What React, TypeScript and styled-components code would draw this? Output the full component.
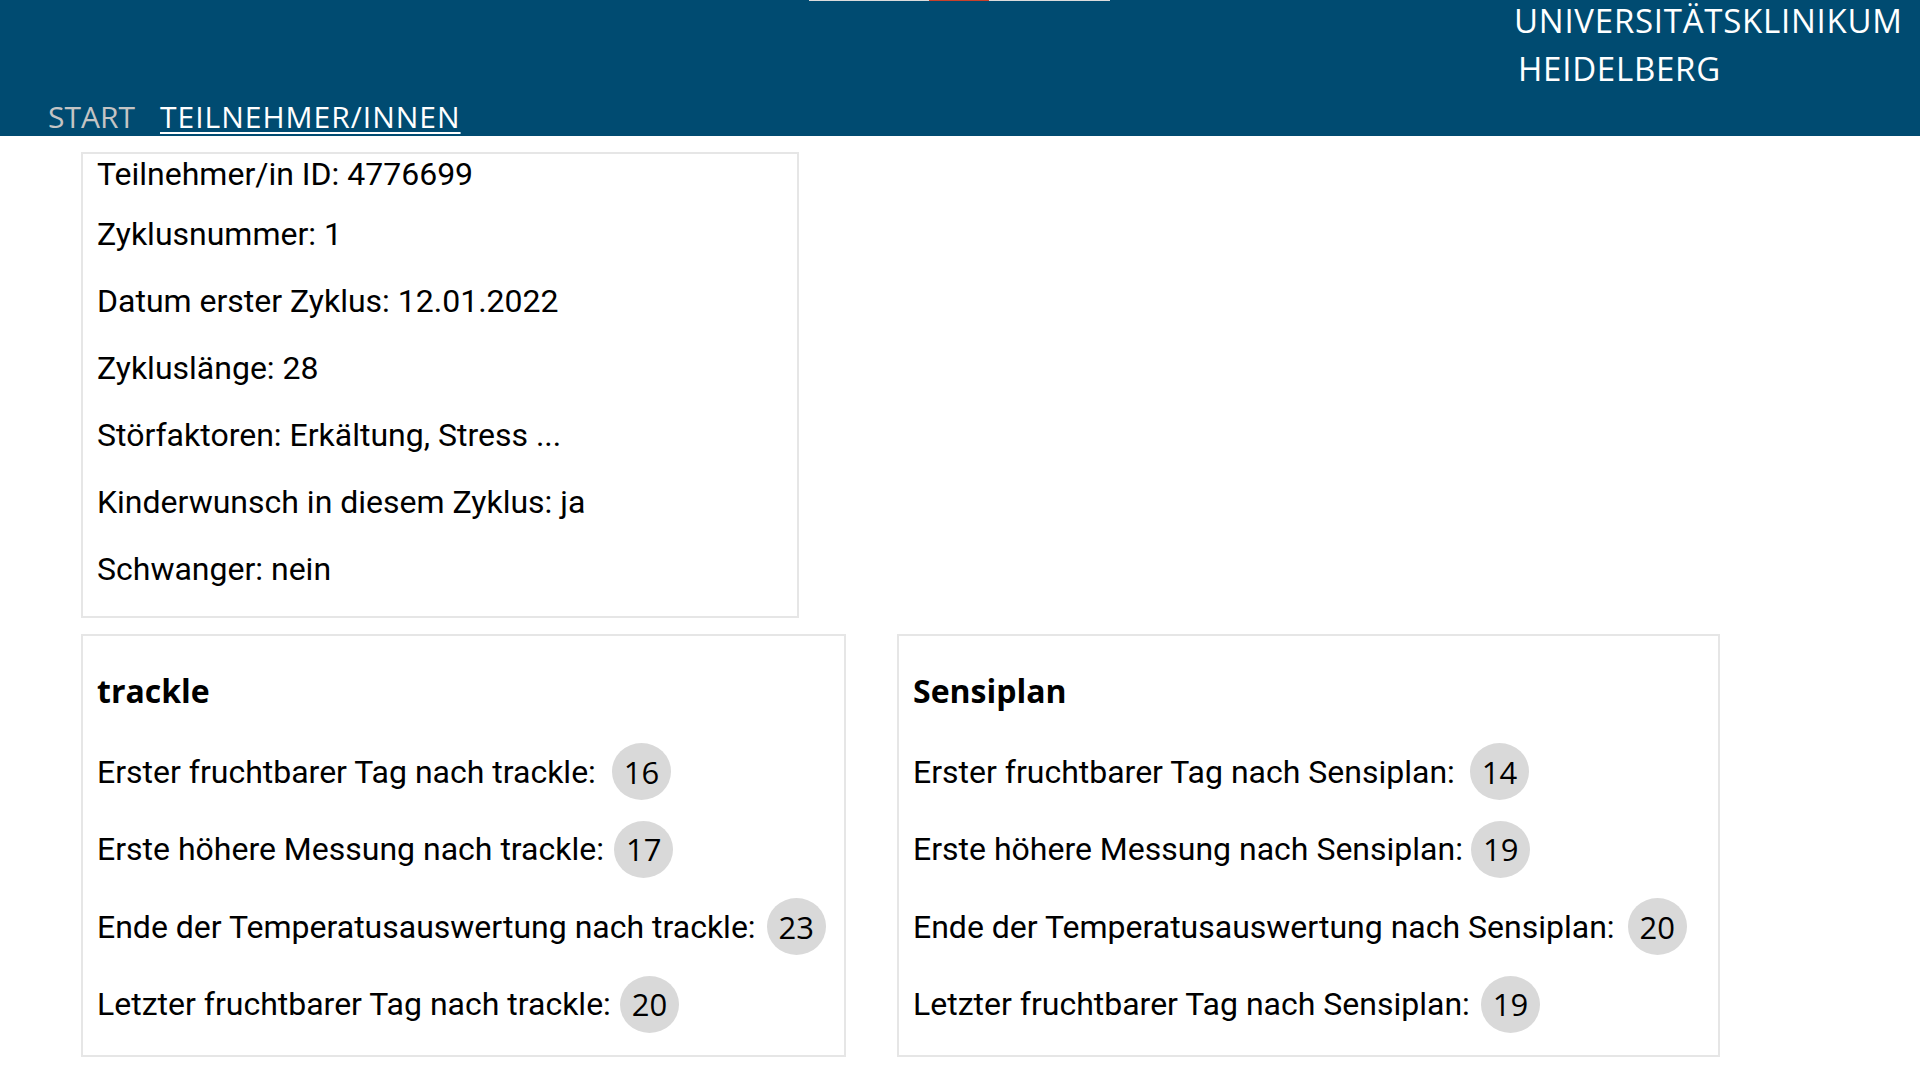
import React from "react";
import styled, { createGlobalStyle } from "styled-components";

const GlobalStyle = createGlobalStyle`
  html, body { margin: 0; padding: 0; background: #ffffff; }
  * { box-sizing: border-box; }
`;

const Header = styled.header`
  position: relative;
  height: 136px;
  background: #004b71;
  display: flex;
  flex-direction: column;
  padding: 0 17px 0 48px;
`;

const TopStrip = styled.div`
  position: absolute;
  top: 0;
  left: 809px;
  width: 301px;
  height: 1px;
  background: linear-gradient(
    to right,
    #dcdcdc 0,
    #dcdcdc 120px,
    #c8412b 120px,
    #c8412b 180px,
    #dcdcdc 180px
  );
`;

const Logo = styled.div`
  align-self: flex-end;
  width: 389px;
  margin-top: -3px;
  height: 96px;
  color: #ffffff;
  font-family: "Open Sans", "Liberation Sans", sans-serif;
  font-size: 33px;
  line-height: 48px;
  letter-spacing: 0.75px;
  white-space: nowrap;
`;

const LogoLine = styled.span<{ $indent?: number }>`
  display: block;
  padding-left: ${(p) => p.$indent ?? 0}px;
`;

const Nav = styled.nav`
  margin-top: 5px;
  display: flex;
  gap: 25px;
  font-family: "Open Sans", "Liberation Sans", sans-serif;
  font-size: 30px;
  line-height: 38px;
`;

const NavLink = styled.a<{ $active?: boolean }>`
  color: ${(p) => (p.$active ? "#ffffff" : "#c4c4c4")};
  letter-spacing: ${(p) => (p.$active ? "1px" : "0")};
  text-decoration: ${(p) => (p.$active ? "underline" : "none")};
  text-decoration-thickness: 2px;
  text-underline-offset: 4px;
  cursor: pointer;
`;

const Main = styled.main`
  padding: 16px 0 0 81px;
  display: flex;
  flex-direction: column;
  align-items: flex-start;
  gap: 16px;
`;

const Card = styled.section<{ $width: number }>`
  width: ${(p) => p.$width}px;
  border: 2px solid #e6e6e6;
  color: #000000;
`;

const InfoCard = styled(Card)`
  padding: 1px 14px 28px 14px;
`;

const InfoLine = styled.p<{ $first?: boolean; $tight?: boolean }>`
  margin: ${(p) => (p.$first ? 0 : p.$tight ? 22 : 29)}px 0 0 0;
  font-family: Roboto, "Liberation Sans", sans-serif;
  font-size: 32px;
  line-height: 38px;
`;

const Sections = styled.div`
  display: flex;
  gap: 51px;
  align-items: flex-start;
`;

const SectionCard = styled(Card)`
  padding: 0 14px 22px 14px;
  display: flex;
  flex-direction: column;
`;

const SectionTitle = styled.h2`
  margin: 33px 0 30px 0;
  font-family: "Open Sans", "Liberation Sans", sans-serif;
  font-weight: 700;
  font-size: 32px;
  line-height: 44px;
`;

const Rows = styled.div`
  display: flex;
  flex-direction: column;
  gap: 20.5px;
`;

const Row = styled.div`
  display: flex;
  align-items: center;
  height: 57px;
`;

const Label = styled.span<{ $gap: number }>`
  font-family: Roboto, "Liberation Sans", sans-serif;
  font-size: 32px;
  margin-right: ${(p) => p.$gap}px;
  white-space: nowrap;
`;

const Badge = styled.span`
  display: inline-flex;
  align-items: center;
  justify-content: center;
  height: 57px;
  padding: 0 12px;
  border-radius: 50%;
  background: #d9d9d9;
  font-family: "Open Sans", "Liberation Sans", sans-serif;
  font-size: 31px;
  color: #000000;
`;

type Item = { label: string; value: string; gap: number };

const trackle: Item[] = [
  { label: "Erster fruchtbarer Tag nach trackle:", value: "16", gap: 16 },
  { label: "Erste höhere Messung nach trackle:", value: "17", gap: 10 },
  { label: "Ende der Temperatusauswertung nach trackle:", value: "23", gap: 11 },
  { label: "Letzter fruchtbarer Tag nach trackle:", value: "20", gap: 9 },
];

const sensiplan: Item[] = [
  { label: "Erster fruchtbarer Tag nach Sensiplan:", value: "14", gap: 15 },
  { label: "Erste höhere Messung nach Sensiplan:", value: "19", gap: 8 },
  { label: "Ende der Temperatusauswertung nach Sensiplan:", value: "20", gap: 13 },
  { label: "Letzter fruchtbarer Tag nach Sensiplan:", value: "19", gap: 11 },
];

const info = [
  "Teilnehmer/in ID: 4776699",
  "Zyklusnummer: 1",
  "Datum erster Zyklus: 12.01.2022",
  "Zykluslänge: 28",
  "Störfaktoren: Erkältung, Stress ...",
  "Kinderwunsch in diesem Zyklus: ja",
  "Schwanger: nein",
];

function Method({ title, items, width }: { title: string; items: Item[]; width: number }) {
  return (
    <SectionCard $width={width}>
      <SectionTitle>{title}</SectionTitle>
      <Rows>
        {items.map((it) => (
          <Row key={it.label}>
            <Label $gap={it.gap}>{it.label}</Label>
            <Badge>{it.value}</Badge>
          </Row>
        ))}
      </Rows>
    </SectionCard>
  );
}

export default function App() {
  return (
    <>
      <GlobalStyle />
      <Header>
        <TopStrip />
        <Logo>
          <LogoLine>UNIVERSITÄTSKLINIKUM</LogoLine>
          <LogoLine $indent={4}>HEIDELBERG</LogoLine>
        </Logo>
        <Nav>
          <NavLink>START</NavLink>
          <NavLink $active>TEILNEHMER/INNEN</NavLink>
        </Nav>
      </Header>
      <Main>
        <InfoCard $width={718}>
          {info.map((t, i) => (
            <InfoLine key={t} $first={i === 0} $tight={i === 1}>
              {t}
            </InfoLine>
          ))}
        </InfoCard>
        <Sections>
          <Method title="trackle" items={trackle} width={765} />
          <Method title="Sensiplan" items={sensiplan} width={823} />
        </Sections>
      </Main>
    </>
  );
}
